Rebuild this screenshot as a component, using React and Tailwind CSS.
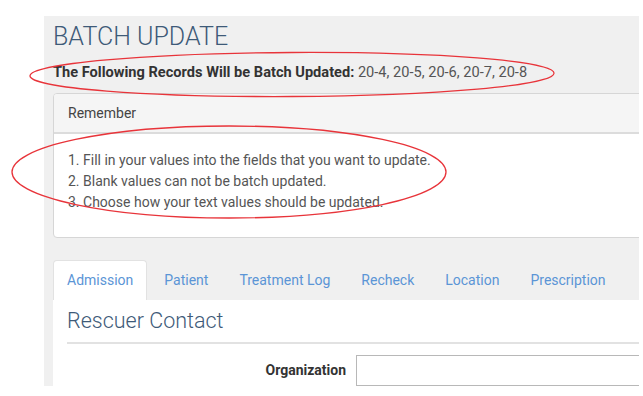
const tabs = ['Admission', 'Patient', 'Treatment Log', 'Recheck', 'Location', 'Prescription']

const steps = [
  '1. Fill in your values into the fields that you want to update.',
  '2. Blank values can not be batch updated.',
  '3. Choose how your text values should be updated.',
]

export default function App() {
  return (
    <div className="relative h-[396px] w-[643px] overflow-hidden bg-white font-['Roboto',sans-serif]">
      <div className="ml-[44px] mt-[16px] h-[370px] w-[595px] overflow-hidden bg-[#f0f0f0] pl-[9px]">
        <div className="w-[640px]">
          <h1 className="pt-[5px] text-[25px] font-light leading-[32px] text-[#3e5a78]">BATCH UPDATE</h1>
          <p className="mt-[10px] text-[14.6px] leading-[18px] text-[#555]">
            <span className="font-bold text-[#333]">The Following Records Will be Batch Updated:</span> 20-4, 20-5, 20-6, 20-7, 20-8
          </p>

          {/* Remember panel */}
          <div className="mt-[12px] overflow-hidden rounded-[4px] border border-[#d6d6d6] bg-white">
            <div className="flex h-[40px] items-center border-b-2 border-[#dcdcdc] bg-[#f5f5f5] px-[14px] text-[14px] text-[#444]">
              Remember
            </div>
            <ul className="px-[14px] pb-[24px] pt-[16px] text-[14px] leading-[21px] text-[#555]">
              {steps.map((s) => (
                <li key={s}>{s}</li>
              ))}
            </ul>
          </div>

          {/* Tabs */}
          <div className="mt-[22px] flex h-[40px] items-stretch text-[14px] text-[#5b95d6]">
            {tabs.map((t, i) => (
              <div
                key={t}
                className={
                  i === 0
                    ? 'mr-[3px] flex items-center rounded-t-[4px] border border-b-0 border-[#e2e2e2] bg-white px-[13px]'
                    : 'mr-[3px] flex items-center border border-transparent px-[13px]'
                }
              >
                {t}
              </div>
            ))}
          </div>
          <div className="h-[90px] bg-white px-[14px]">
            <h2 className="pt-[8px] text-[21.5px] font-light leading-[26px] text-[#3e5a78]">Rescuer Contact</h2>
            <div className="mt-[8px] border-b-2 border-[#e2e2e2]" />
            <div className="mt-[11px] flex items-center">
              <label className="w-[289px] pr-[10px] text-right text-[14px] font-bold text-[#333]">Organization</label>
              <input className="h-[31px] w-[320px] border border-[#b8b8b8] bg-white" />
            </div>
          </div>
        </div>
      </div>

      {/* red annotation rings */}
      <svg className="pointer-events-none absolute left-0 top-0" width="643" height="396">
        <ellipse cx="292" cy="74.5" rx="262" ry="22" fill="none" stroke="#e8343a" strokeWidth="1.3" transform="rotate(-0.3 292 74.5)" />
        <ellipse cx="229" cy="172" rx="217" ry="46" fill="none" stroke="#e8343a" strokeWidth="1.3" />
      </svg>
    </div>
  )
}
